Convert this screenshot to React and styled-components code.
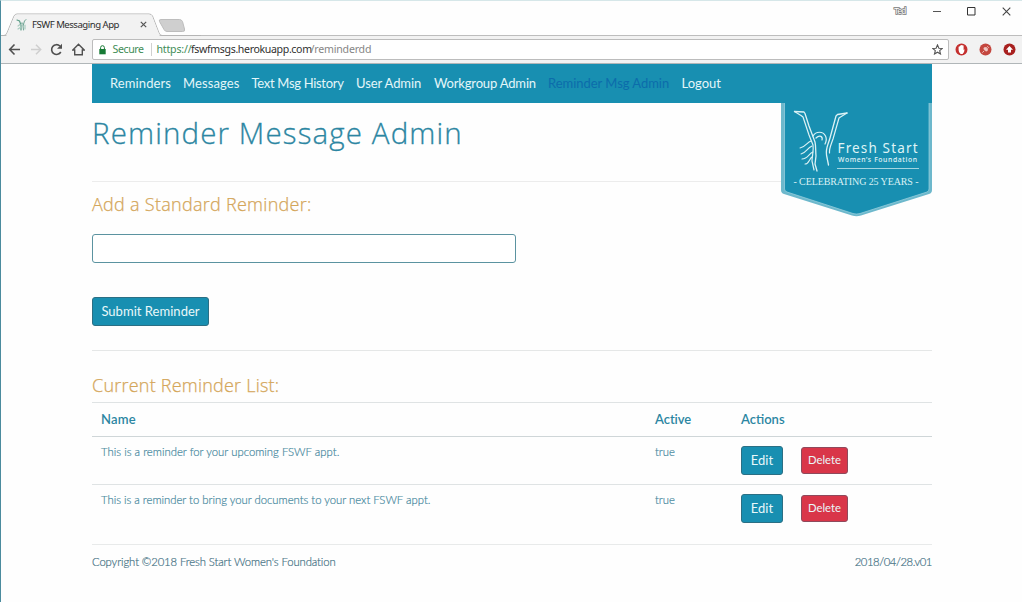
import React from 'react';
import styled, { createGlobalStyle } from 'styled-components';

const GlobalStyle = createGlobalStyle`
  * { box-sizing: border-box; }
  html, body { margin: 0; padding: 0; background: #fefefe; }
  body { font-family: Lato, "Open Sans", sans-serif; color: #4f8799; overflow: hidden; }
`;

const Window = styled.div`
  width: 1022px;
  height: 602px;
  border-left: 1px solid #4b8b9e;
  border-top: 1px solid #d6e7e9;
  background: #fefefe;
  display: flex;
  flex-direction: column;
`;

const TitleBar = styled.header`
  height: 35px;
  flex: none;
  display: flex;
  align-items: flex-start;
  justify-content: space-between;
  border-bottom: 1px solid #bdbdbd;
`;

const TabStrip = styled.div`
  position: relative;
  width: 200px;
  height: 23px;
  margin-top: 12px;
`;

const TabShape = styled.svg`
  position: absolute;
  left: 0;
  top: 0;
  display: block;
`;

const TabContent = styled.div`
  position: relative;
  display: flex;
  align-items: center;
  height: 23px;
  padding-left: 15px;
`;

const TabTitle = styled.span`
  margin-left: 5px;
  width: 108px;
  font: 9.6px/14px "Noto Sans", sans-serif;
  letter-spacing: -0.5px;
  color: #2d2d2d;
`;

const WindowControls = styled.div`
  display: flex;
  align-items: center;
  height: 20px;
  padding-right: 11px;
`;

const UserName = styled.span`
  font: 8.5px/12px "Liberation Sans", sans-serif;
  letter-spacing: -0.7px;
  color: #fff;
  -webkit-text-stroke: 1.6px #777;
  paint-order: stroke;
  margin-right: 25px;
  width: 14px;
`;

const Control = styled.svg`
  display: block;
  margin-left: ${p => p.$gap || 0}px;
`;

const Toolbar = styled.div`
  flex: none;
  height: 28px;
  display: flex;
  align-items: center;
  background: #f2f2f2;
  border-bottom: 1px solid #b0b6b8;
  padding: 0 6px 0 7px;
`;

const ToolIcon = styled.svg`
  flex: none;
  display: block;
  margin-right: ${p => p.$gap || 0}px;
`;

const AddressBar = styled.div`
  flex: none;
  width: 857px;
  height: 21px;
  border: 1px solid #bcbcbc;
  border-radius: 2px;
  background: #fff;
  display: flex;
  align-items: center;
  padding: 0 5px 0 6px;
`;

const UrlPart = styled.span`
  font: 10.6px/16px "Noto Sans", "Open Sans", sans-serif;
  color: ${p => p.$color};
  letter-spacing: ${p => p.$track}px;
  width: ${p => p.$width}px;
  margin-top: -1px;
  white-space: nowrap;
`;

const SecureDivider = styled.span`
  width: 1px;
  height: 13px;
  background: #d0d0d0;
  margin-right: 5px;
`;

const Grow = styled.span`
  flex: 1;
`;

const Page = styled.main`
  width: 840px;
  margin-left: 91px;
  display: flex;
  flex-direction: column;
`;

const Nav = styled.nav`
  position: relative;
  height: 39px;
  background: #188fb1;
  display: flex;
  align-items: center;
  padding: 0 0 2px 18px;
`;

const NavLink = styled.a`
  font-size: 13px;
  line-height: 20px;
  width: ${p => p.$width}px;
  letter-spacing: ${p => p.$track}px;
  white-space: nowrap;
  color: ${p => (p.$active ? '#0c6cab' : '#e4f6f9')};
`;

const Badge = styled.svg`
  position: absolute;
  left: 688px;
  top: 39px;
  display: block;
`;

const PageTitle = styled.h1`
  margin: 0;
  height: 79px;
  padding-top: 12px;
  border-bottom: 1px solid #ececec;
  font-family: "Open Sans", sans-serif;
  font-size: 29.5px;
  line-height: 36px;
  font-weight: 300;
  letter-spacing: 1.12px;
  color: #2c86a2;
  -webkit-text-stroke: 0.3px #2c86a2;
`;

const SectionTitle = styled.h2`
  margin: ${p => p.$top}px 0 0;
  font-family: "Open Sans", sans-serif;
  font-size: 18px;
  line-height: 24px;
  font-weight: 300;
  letter-spacing: ${p => p.$track}px;
  color: #d4a65a;
  -webkit-text-stroke: 0.25px #d4a65a;
`;

const Field = styled.input`
  display: block;
  margin-top: 18px;
  width: 424px;
  height: 29px;
  border: 1px solid #5b93a0;
  border-radius: 3px;
  background: #fff;
  outline: none;
`;

const Button = styled.button`
  width: ${p => p.$width}px;
  height: ${p => (p.$danger ? 27 : 29)}px;
  padding: 0 0 2px;
  border: 1px solid ${p => (p.$danger ? '#8e4a5c' : '#2b6f84')};
  border-radius: 3px;
  background: ${p => (p.$danger ? '#d93649' : '#188fb1')};
  color: #e9f8fa;
  font-family: Lato, sans-serif;
  font-size: ${p => (p.$danger ? 11.3 : 13)}px;
  letter-spacing: ${p => (p.$danger ? 0 : 0.03)}px;
`;

const SubmitRow = styled.div`
  display: flex;
  height: 88px;
  padding-top: 34px;
  border-bottom: 1px solid #e5e7e7;
`;

const Table = styled.div`
  margin-top: 5px;
  border-top: 1px solid #dfe3e4;
`;

const TableRow = styled.div`
  display: grid;
  grid-template-columns: 554px 86px 1fr;
  padding-left: 9px;
  height: ${p => p.$height}px;
  border-bottom: ${p => (p.$last ? '0' : p.$head ? '1px solid #cfd6d8' : '1px solid #dfe3e4')};
`;

const HeadCell = styled.div`
  padding-top: 6px;
  font-size: 13px;
  line-height: 20px;
  font-weight: 600;
  color: #2c86a2;
  letter-spacing: ${p => p.$track}px;
`;

const Cell = styled.div`
  padding-top: 5px;
  font-size: 11.3px;
  line-height: 20px;
  font-weight: 300;
  color: #4889a0;
  -webkit-text-stroke: 0.2px #4889a0;
  letter-spacing: ${p => p.$track}px;
`;

const Actions = styled.div`
  display: flex;
  align-items: center;
  height: 29px;
  margin-top: 9px;
  gap: 18px;
`;

const Footer = styled.footer`
  margin-top: 11px;
  border-top: 1px solid #e8eaea;
  padding-top: 7px;
  display: flex;
  justify-content: space-between;
  font-size: 11.3px;
  line-height: 20px;
  font-weight: 300;
  color: #457284;
  -webkit-text-stroke: 0.2px #457284;
`;

const Copyright = styled.span`
  letter-spacing: -0.11px;
`;

const Version = styled.span`
  letter-spacing: -0.43px;
`;

const links = [
  ['Reminders', 73, 0.11],
  ['Messages', 68.5, 0.1],
  ['Text Msg History', 104.5, -0.3],
  ['User Admin', 78, -0.1],
  ['Workgroup Admin', 114, -0.17],
  ['Reminder Msg Admin', 133.5, -0.03],
  ['Logout', 40, 0],
];

const reminders = [
  ['This is a reminder for your upcoming FSWF appt.', 48, 0.02],
  ['This is a reminder to bring your documents to your next FSWF appt.', 48, -0.01],
];

function Figure() {
  return (
    <g fill="none" stroke="#dcf2f5" strokeLinecap="round" strokeLinejoin="round">
      <path d="M14.500 8.500 L24 9 L25 10.500 L29 23 L35 39 C36 43 35.500 48 36 53 L35 61 L37 68" strokeWidth="1.300" />
      <path d="M14.500 8.500 L21 12.500 L23 14 L29 32 L33 42 C34 48 32 53 32 58 L34 67" strokeWidth="1.200" />
      <path d="M67 10 L57.500 11.500 L56 13 L50 35 C48 42 45.500 45 46.500 52 L48.500 62" strokeWidth="1.300" />
      <path d="M67 10 L60.500 14 L59 15 L53 36 C51 42 49 45 49.500 50" strokeWidth="1.200" />
      <path d="M33 33 C36 28 43 28 45.500 33 C47 36 46 39 45 41 M36 35 C40 31 43 34 42 37" strokeWidth="1.200" />
      <path d="M31 38 C27 39 26 44 20 45 M32 43 C27 45 26 50 21 51 M33 49 C29 50 28 56 22 56 M32 54 C29 56 29 61 25 61" strokeWidth="1.100" />
    </g>
  );
}

function FoundationBadge() {
  return (
    <Badge width="153" height="115" viewBox="0 0 153 115">
      <path d="M1 0 H152 V87 Q152 90 149 91 L81 112.500 Q76.500 114 72 112.500 L4 91 Q1 90 1 87 Z" fill="#6db8cc" />
      <path d="M4.500 0 H149 V86 Q149 88 147 89 L80 110.500 Q76.500 111.500 73 110.500 L7 89 Q4.500 88 4.500 86 Z" fill="#188fb1" />
      <path d="M4.500 0 V86 Q4.500 88 7 89 L73 110.500 Q76.500 111.500 80 110.500 L147 89 Q149 88 149 86 V0" fill="none" stroke="#9fd3df" strokeWidth="0.7" />
      <Figure />
      <text x="57.500" y="49.500" fontFamily="Noto Sans" fontSize="13.500" fill="#dff4f6" textLength="80">Fresh Start</text>
      <text x="58" y="58.500" fontFamily="Noto Sans" fontSize="6.800" fontWeight="500" fill="#e0f4f7" textLength="79">Women’s Foundation</text>
      <path d="M57 65.500 H139" stroke="#a3d5e0" />
      <text x="13.500" y="81.500" fontFamily="Liberation Serif" fontSize="10" fill="#d8f1f4" textLength="125">- CELEBRATING 25 YEARS -</text>
    </Badge>
  );
}

function BrowserChrome() {
  return (
    <>
      <TitleBar>
        <TabStrip>
          <TabShape width="200" height="24" viewBox="0 0 200 24">
            <path d="M0 22.500 H3 Q5 22.500 6 20 L13 3 Q14 1 16 1 H148 Q150.500 1 151.500 3 L158 20 Q159 22.500 161 22.500 H200" fill="none" stroke="#b5b5b5" />
            <path d="M5 23.500 L13.500 3 Q14 1.500 16 1.500 H148 Q150 1.500 151 3 L159 23.500 Z" fill="#f2f2f2" />
            <path d="M160 6.500 H178.500 Q180.500 6.500 181.500 8.500 L183.500 16 Q184.500 18.500 181.500 18.500 H166 Q164 18.500 163 16.500 L158.500 8.500 Q157.500 6.500 160 6.500 Z" fill="#cfcfcf" stroke="#bdbdbd" />
          </TabShape>
          <TabContent>
            <svg width="11" height="13" viewBox="0 0 11 13" fill="none" strokeLinecap="round">
              <path d="M1 2 L3.500 3 L5 7 L5 12" stroke="#5b9c86" strokeWidth="1.2" />
              <path d="M10 1.500 L8.500 3 L7 8 L7.500 12 M4.500 6 C6 4 7.500 5 7 7" stroke="#6fa594" strokeWidth="1" />
              <path d="M2 8 L4 6.500 M2 11 L5 9 M9 7 V11" stroke="#a9ccc0" strokeWidth="1.2" />
            </svg>
            <TabTitle>FSWF Messaging App</TabTitle>
            <svg width="7" height="7" viewBox="0 0 7 7">
              <path d="M0.800 0.800 L6.200 6.200 M6.200 0.800 L0.800 6.200" stroke="#555" strokeWidth="1.2" />
            </svg>
          </TabContent>
        </TabStrip>
        <WindowControls>
          <UserName>Ted</UserName>
          <Control width="8" height="9" viewBox="0 0 8 9">
            <path d="M0 4.500 H8" stroke="#555" strokeWidth="1" />
          </Control>
          <Control $gap={26} width="9" height="9" viewBox="0 0 9 9">
            <path d="M0.500 0.500 H8 V8 H0.500 Z" fill="none" stroke="#333" />
          </Control>
          <Control $gap={26} width="9" height="9" viewBox="0 0 9 9">
            <path d="M0.700 0.700 L8.300 8.300 M8.300 0.700 L0.700 8.300" stroke="#444" strokeWidth="1.100" />
          </Control>
        </WindowControls>
      </TitleBar>
      <Toolbar>
        <ToolIcon $gap={9} width="13" height="13" viewBox="0 0 13 13" fill="none" stroke="#505050" strokeWidth="1.600">
          <path d="M12 6.500 H2 M6.500 1.500 L1.700 6.500 L6.500 11.500" />
        </ToolIcon>
        <ToolIcon $gap={8} width="12" height="13" viewBox="0 0 12 13" fill="none" stroke="#cfcfcf" strokeWidth="1.500">
          <path d="M1 6.500 H10.500 M6 1.700 L10.700 6.500 L6 11.300" />
        </ToolIcon>
        <ToolIcon $gap={8.500} width="13" height="13" viewBox="0 0 13 13">
          <path d="M10.800 9 A4.900 4.900 0 1 1 9.900 3" fill="none" stroke="#505050" strokeWidth="1.600" />
          <path d="M12 0.800 V5.800 H7 Z" fill="#505050" />
        </ToolIcon>
        <ToolIcon $gap={7} width="13" height="13" viewBox="0 0 13 13" fill="none" stroke="#505050" strokeWidth="1.400">
          <path d="M0.800 7 L6.500 1.300 L12.200 7 H10.300 V11.700 H2.700 V7 Z" />
        </ToolIcon>
        <AddressBar>
          <ToolIcon $gap={7} width="7" height="10" viewBox="0 0 7 10">
            <path d="M0.300 4 H6.700 V9.300 H0.300 Z" fill="#177a35" />
            <path d="M1.600 4 V2.600 A1.900 1.900 0 0 1 5.400 2.600 V4" fill="none" stroke="#177a35" strokeWidth="1" />
          </ToolIcon>
          <UrlPart $color="#408c55" $track={-0.4} $width={38}>Secure</UrlPart>
          <SecureDivider />
          <UrlPart $color="#408c55" $track={-0.2} $width={34.500}>https://</UrlPart>
          <UrlPart $color="#303030" $track={-0.36} $width={119.5}>fswfmsgs.herokuapp.com</UrlPart>
          <UrlPart $color="#858585" $track={-0.2} $width={60}>/reminderdd</UrlPart>
          <Grow />
          <ToolIcon width="11" height="11" viewBox="0 0 11 11" fill="none" stroke="#555" strokeWidth="1.100">
            <path d="M5.500 0.900 L6.900 4.200 L10.300 4.400 L7.700 6.700 L8.500 10 L5.500 8.200 L2.500 10 L3.300 6.700 L0.700 4.400 L4.100 4.200 Z" />
          </ToolIcon>
        </AddressBar>
        <Grow />
        <ToolIcon $gap={11} width="13" height="13" viewBox="0 0 13 13">
          <circle cx="6.500" cy="6.500" r="5.300" fill="#c4302f" stroke="#c4302f" strokeWidth="1.400" />
          <path d="M3.600 3.800 Q4.500 3 5 3.200 V2.400 H6.200 V2 H7.400 V2.600 H8.600 V7 L9.600 6.300 Q9.500 9.500 7.600 11 H5.600 Q3.600 9.500 3.600 7 Z" fill="#fff" />
        </ToolIcon>
        <ToolIcon $gap={11} width="13" height="13" viewBox="0 0 13 13">
          <circle cx="6.500" cy="6.500" r="6" fill="#c4473f" />
          <path d="M4.400 6 L7 8.600 Q9 8.300 9 6.500 L6.500 4 Q4.400 4 4.400 6 Z" fill="#f1c9c4" />
          <path d="M3.300 9.700 L5.200 7.800 M7.300 4.800 L8.900 3.200 M8.300 5.800 L9.900 4.200" stroke="#f1c9c4" strokeWidth="0.900" />
        </ToolIcon>
        <ToolIcon width="13" height="13" viewBox="0 0 13 13">
          <circle cx="6.500" cy="6.500" r="6" fill="#a8201f" />
          <path d="M6.500 3 L10 6.700 H8 V9.500 H5 V6.700 H3 Z" fill="#fff" />
        </ToolIcon>
      </Toolbar>
    </>
  );
}

export default function App() {
  return (
    <>
      <GlobalStyle />
      <Window>
        <BrowserChrome />
        <Page>
          <Nav>
            {links.map(([label, width, track]) => (
              <NavLink key={label} $width={width} $track={track} $active={label === 'Reminder Msg Admin'}>
                {label}
              </NavLink>
            ))}
            <FoundationBadge />
          </Nav>
          <PageTitle>Reminder Message Admin</PageTitle>
          <SectionTitle $top={10} $track={0.28}>Add a Standard Reminder:</SectionTitle>
          <Field aria-label="Reminder" />
          <SubmitRow>
            <Button $width={117}>Submit Reminder</Button>
          </SubmitRow>
          <SectionTitle $top={22} $track={0.22}>Current Reminder List:</SectionTitle>
          <Table>
            <TableRow $head $height={34}>
              <HeadCell $track={0.2}>Name</HeadCell>
              <HeadCell $track={-0.05}>Active</HeadCell>
              <HeadCell $track={0}>Actions</HeadCell>
            </TableRow>
            {reminders.map(([text, height, track], i) => (
              <TableRow key={text} $height={height} $last={i === reminders.length - 1}>
                <Cell $track={track}>{text}</Cell>
                <Cell $track={0}>true</Cell>
                <Actions>
                  <Button $width={42}>Edit</Button>
                  <Button $danger $width={47}>Delete</Button>
                </Actions>
              </TableRow>
            ))}
          </Table>
          <Footer>
            <Copyright>Copyright ©2018 Fresh Start Women's Foundation</Copyright>
            <Version>2018/04/28.v01</Version>
          </Footer>
        </Page>
      </Window>
    </>
  );
}
